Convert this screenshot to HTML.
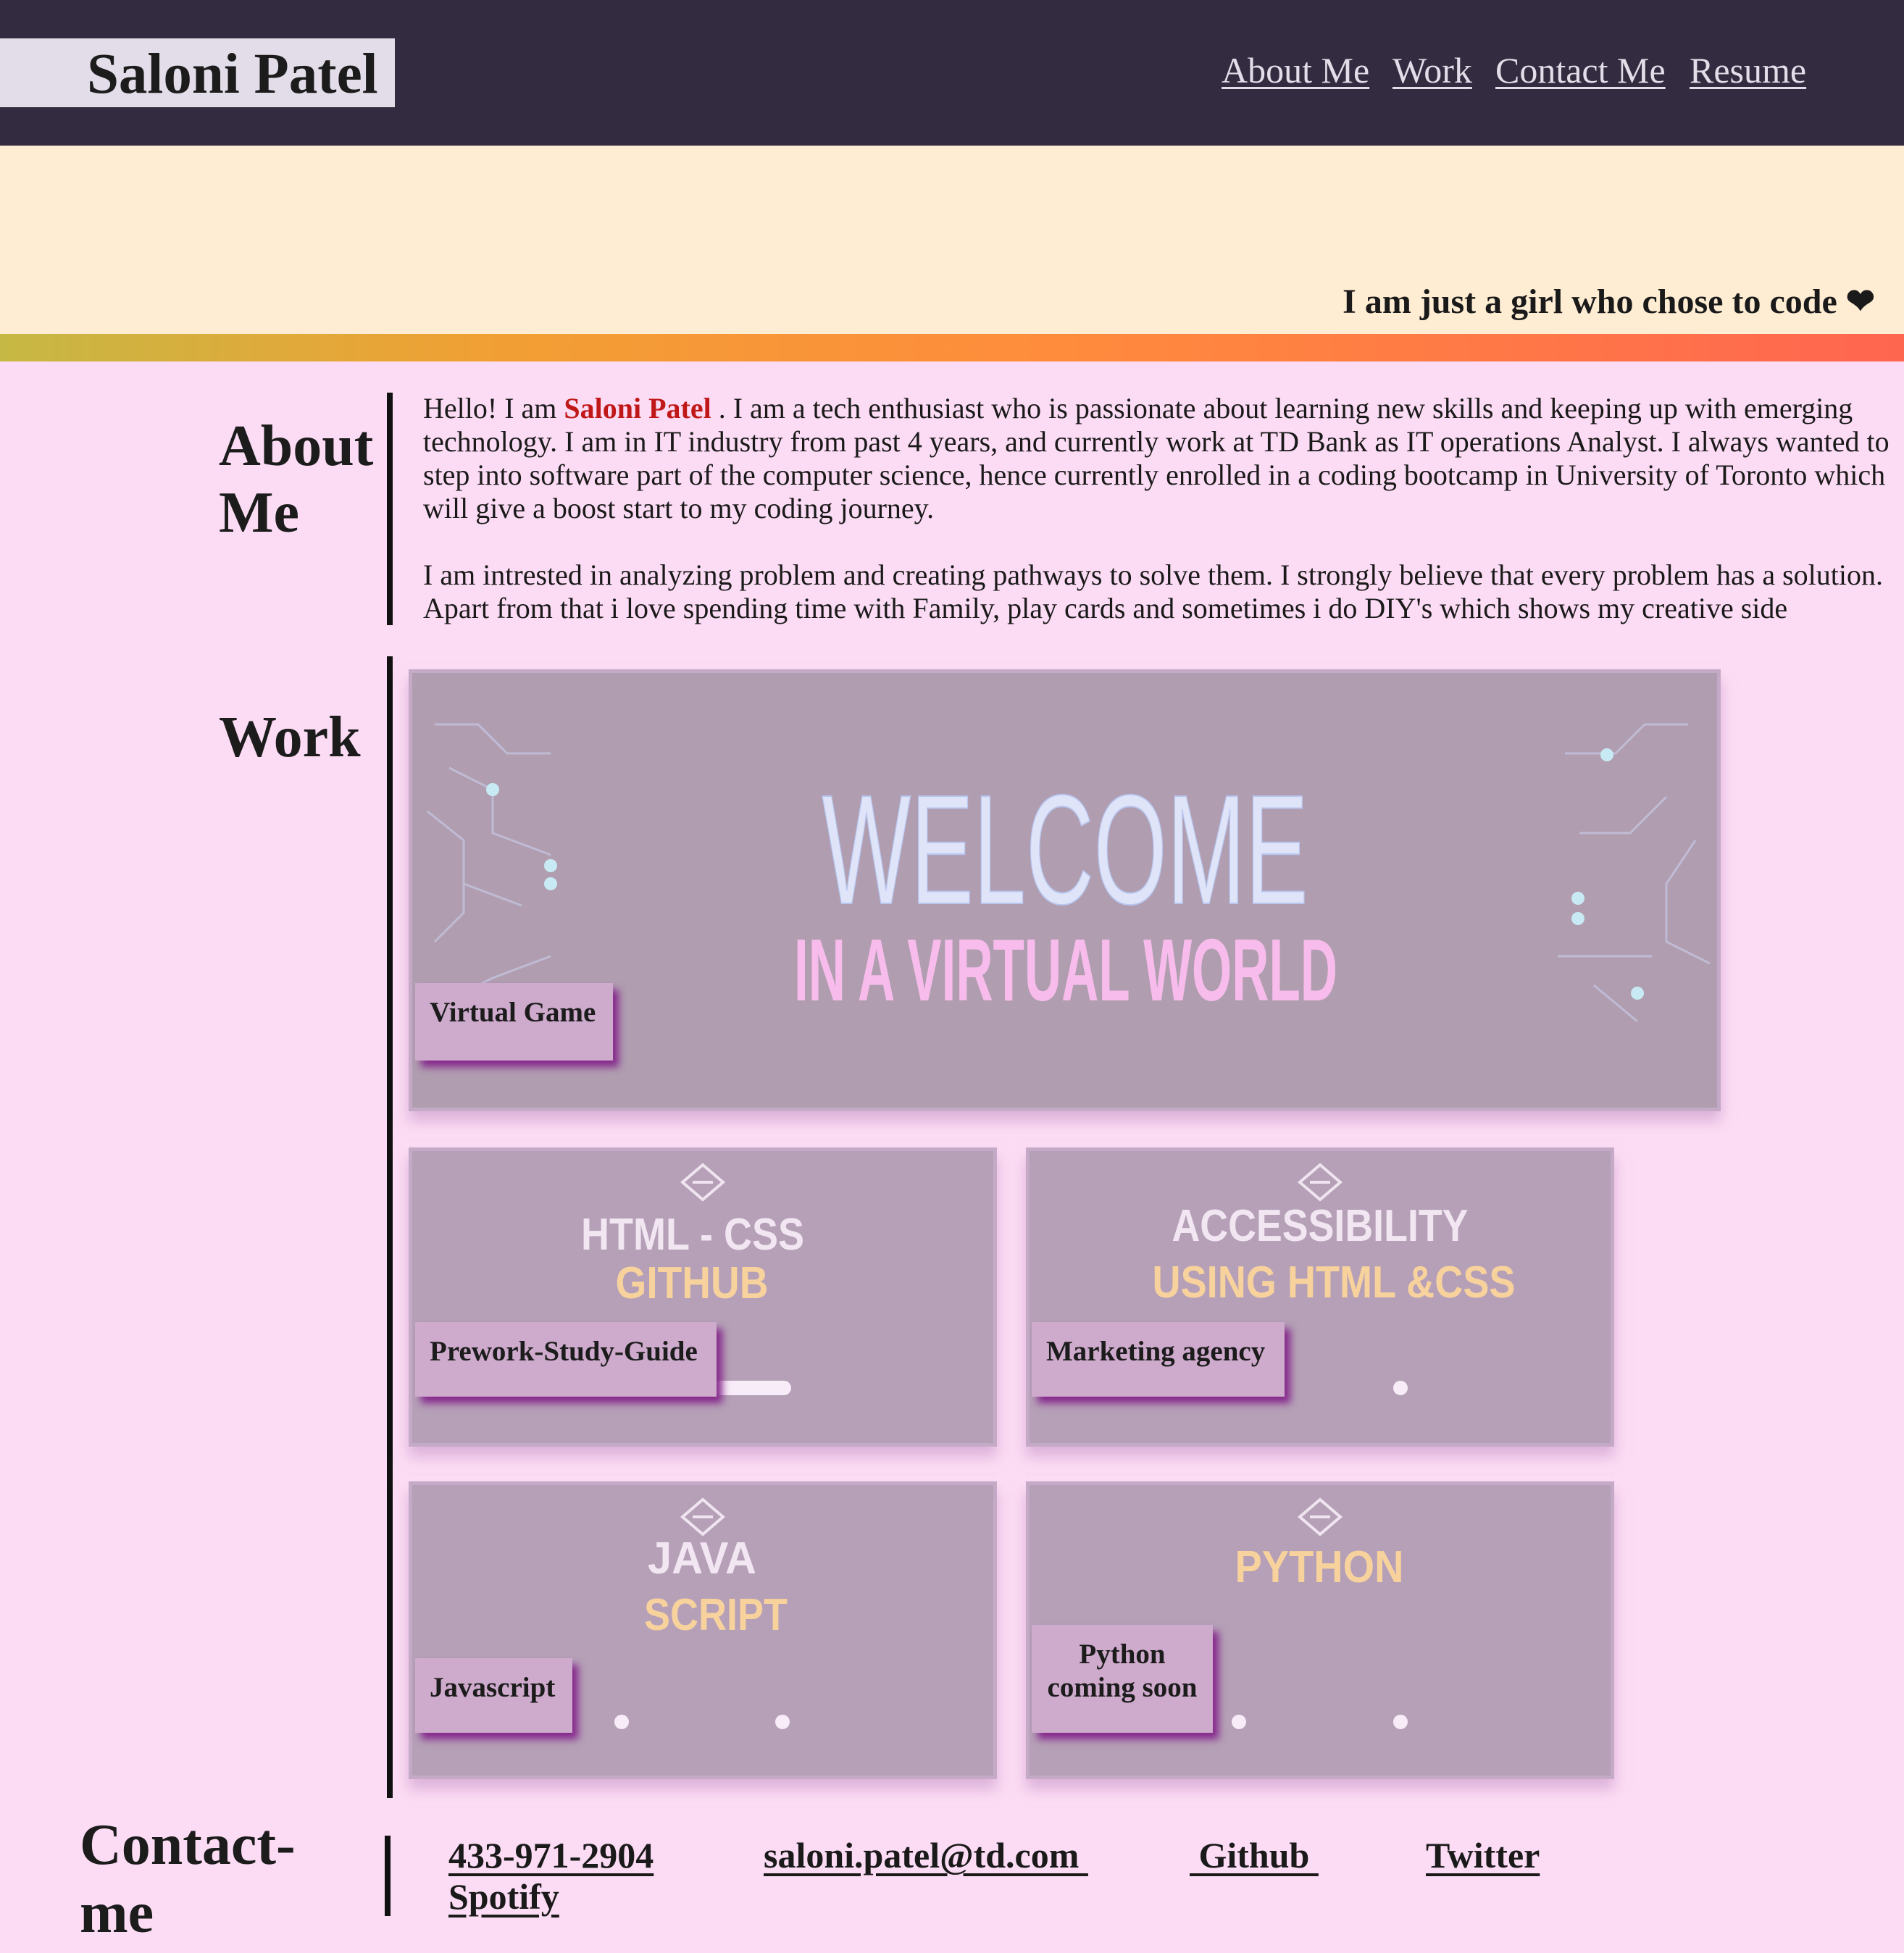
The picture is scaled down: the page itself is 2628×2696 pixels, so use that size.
<!DOCTYPE html>
<html><head><meta charset="utf-8">
<style>
*{margin:0;padding:0;box-sizing:border-box}
body{width:2628px;height:2696px;background:#fcdcf4;position:relative;overflow:hidden;font-family:"Liberation Serif",serif;color:#1a1a1a}
.a{position:absolute}
#hdr{left:0;top:0;width:2628px;height:201px;background:#332c40}
#logo{left:0;top:53px;width:545px;height:95px;background:#e3dde9;font-weight:bold;font-size:79px;line-height:99px;padding-left:120px;color:#1c1c1c;white-space:nowrap}
.nav{top:68px;font-size:50px;color:#e3dde9;text-decoration:underline;text-decoration-thickness:3px;text-underline-offset:6px;white-space:nowrap}
#hero{left:0;top:201px;width:2628px;height:260px;background:#feedd3}
#tag{right:40px;top:388px;font-size:48px;font-weight:bold;white-space:nowrap}
#band{left:0;top:461px;width:2628px;height:38px;background:linear-gradient(90deg,#c6b844 0%,#f0a034 25%,#ff8c3c 55%,#ff6650 100%)}
h2{position:absolute;font-size:80px;line-height:92px;font-weight:bold;color:#1c1c1c}
.bar{position:absolute;background:#111;width:8px}
.p{left:584px;font-size:40px;line-height:46px;white-space:nowrap}
.card{position:absolute;background:#b5a0b7;border:5px solid #c4aac6;box-shadow:0 14px 18px rgba(200,150,200,.6)}
.lbl{position:absolute;background:#ceaacc;font-weight:bold;font-size:39px;box-shadow:8px 9px 10px #86288c;color:#1c1c1c;padding:18px 0 0 20px;white-space:nowrap;line-height:46px}
.dot{position:absolute;width:20px;height:20px;border-radius:50%;background:#f8ecf8}
.c{position:absolute;font-size:50px;font-weight:bold;text-decoration:underline;text-decoration-thickness:4px;text-underline-offset:8px;white-space:nowrap}
</style></head><body>
<div id="hdr" class="a"></div>
<div id="logo" class="a">Saloni Patel</div>
<div class="a nav" style="left:1686px">About Me</div>
<div class="a nav" style="left:1922px">Work</div>
<div class="a nav" style="left:2064px">Contact Me</div>
<div class="a nav" style="left:2332px">Resume</div>
<div id="hero" class="a"></div>
<div id="tag" class="a">I am just a girl who chose to code &#10084;</div>
<div id="band" class="a"></div>

<h2 style="left:302px;top:570px">About<br>Me</h2>
<div class="bar" style="left:534px;top:542px;height:321px"></div>
<div class="a p" style="top:541px">Hello! I am <b style="color:#c01818">Saloni Patel</b> . I am a tech enthusiast who is passionate about learning new skills and keeping up with emerging</div>
<div class="a p" style="top:587px">technology. I am in IT industry from past 4 years, and currently work at TD Bank as IT operations Analyst. I always wanted to</div>
<div class="a p" style="top:633px">step into software part of the computer science, hence currently enrolled in a coding bootcamp in University of Toronto which</div>
<div class="a p" style="top:679px">will give a boost start to my coding journey.</div>
<div class="a p" style="top:771px">I am intrested in analyzing problem and creating pathways to solve them. I strongly believe that every problem has a solution.</div>
<div class="a p" style="top:817px">Apart from that i love spending time with Family, play cards and sometimes i do DIY's which shows my creative side</div>

<h2 style="left:302px;top:972px">Work</h2>
<div class="bar" style="left:534px;top:906px;height:1576px"></div>

<div class="card" style="left:564px;top:924px;width:1811px;height:610px;background:#b09eb0"></div>
<svg class="a" style="left:0;top:0" width="2628" height="2696">
<g fill="none" stroke="#c8c8e4" stroke-width="3" opacity=".7">
<path d="M600 1000 L660 1000 L700 1040 L760 1040 M620 1060 L680 1090 L680 1150 L760 1180 M590 1120 L640 1160 L640 1260 L600 1300 M640 1220 L720 1250 M760 1320 L680 1350 L620 1380"/>
<path d="M2330 1000 L2270 1000 L2230 1040 L2160 1040 M2300 1100 L2250 1150 L2180 1150 M2340 1160 L2300 1220 L2300 1300 L2360 1330 M2280 1320 L2150 1320 M2200 1360 L2260 1410"/>
</g>
<g fill="#c8eaf4"><circle cx="680" cy="1090" r="9"/><circle cx="760" cy="1195" r="9"/><circle cx="760" cy="1220" r="9"/><circle cx="2218" cy="1042" r="9"/><circle cx="2178" cy="1240" r="9"/><circle cx="2178" cy="1268" r="9"/><circle cx="2260" cy="1371" r="9"/></g>
<text x="1470" y="1247" text-anchor="middle" font-family="Liberation Sans" font-size="215" fill="#dfe4f8" textLength="671" lengthAdjust="spacingAndGlyphs" stroke="#b8c6f0" stroke-width="2">WELCOME</text>
<text x="1471" y="1381" text-anchor="middle" font-family="Liberation Sans" font-weight="bold" font-size="122" fill="#f8bcec" textLength="750" lengthAdjust="spacingAndGlyphs">IN A VIRTUAL WORLD</text>
</svg>
<div class="lbl" style="left:573px;top:1357px;width:273px;height:107px">Virtual Game</div>

<div class="card" style="left:564px;top:1584px;width:812px;height:413px"></div>
<div class="card" style="left:1416px;top:1584px;width:812px;height:413px"></div>
<div class="card" style="left:564px;top:2045px;width:812px;height:411px"></div>
<div class="card" style="left:1416px;top:2045px;width:812px;height:411px"></div>
<svg class="a" style="left:0;top:0" width="2628" height="2696" font-family="Liberation Sans" font-weight="bold" text-anchor="middle">
<g fill="none" stroke="#f0e4f0" stroke-width="4">
<path d="M970 1608 L998 1632 L970 1656 L942 1632 Z M956 1632 L984 1632"/>
<path d="M1822 1608 L1850 1632 L1822 1656 L1794 1632 Z M1808 1632 L1836 1632"/>
<path d="M970 2070 L998 2094 L970 2118 L942 2094 Z M956 2094 L984 2094"/>
<path d="M1822 2070 L1850 2094 L1822 2118 L1794 2094 Z M1808 2094 L1836 2094"/>
</g>
<text x="956" y="1725" font-size="62" fill="#f2e6f2" textLength="308" lengthAdjust="spacingAndGlyphs">HTML - CSS</text>
<text x="955" y="1792" font-size="62" fill="#f8d29c" textLength="211" lengthAdjust="spacingAndGlyphs">GITHUB</text>
<text x="1822" y="1713" font-size="62" fill="#f2e6f2" textLength="409" lengthAdjust="spacingAndGlyphs">ACCESSIBILITY</text>
<text x="1841" y="1791" font-size="62" fill="#f8d29c" textLength="501" lengthAdjust="spacingAndGlyphs">USING HTML &amp;CSS</text>
<text x="969" y="2172" font-size="62" fill="#f2e6f2" textLength="150" lengthAdjust="spacingAndGlyphs">JAVA</text>
<text x="988" y="2250" font-size="62" fill="#f8d29c" textLength="198" lengthAdjust="spacingAndGlyphs">SCRIPT</text>
<text x="1821" y="2184" font-size="62" fill="#f8d29c" textLength="233" lengthAdjust="spacingAndGlyphs">PYTHON</text>
</svg>
<div class="a" style="left:960px;top:1906px;width:132px;height:20px;border-radius:10px;background:#f8ecf8"></div>
<div class="dot" style="left:1923px;top:1906px"></div>
<div class="dot" style="left:848px;top:2367px"></div>
<div class="dot" style="left:1070px;top:2367px"></div>
<div class="dot" style="left:1700px;top:2367px"></div>
<div class="dot" style="left:1923px;top:2367px"></div>
<div class="lbl" style="left:573px;top:1825px;width:416px;height:103px">Prework-Study-Guide</div>
<div class="lbl" style="left:1424px;top:1825px;width:349px;height:103px">Marketing agency</div>
<div class="lbl" style="left:573px;top:2289px;width:217px;height:103px">Javascript</div>
<div class="lbl" style="left:1424px;top:2243px;width:250px;height:149px;text-align:center;padding:18px 0 0 0">Python<br>coming soon</div>

<h2 style="left:110px;top:2500px;line-height:94px">Contact-<br>me</h2>
<div class="bar" style="left:531px;top:2534px;height:111px"></div>
<div class="c" style="left:619px;top:2532px">433-971-2904</div>
<div class="c" style="left:1054px;top:2532px">saloni.patel@td.com&nbsp;</div>
<div class="c" style="left:1642px;top:2532px">&nbsp;Github&nbsp;</div>
<div class="c" style="left:1968px;top:2532px">Twitter</div>
<div class="c" style="left:619px;top:2589px">Spotify</div>
</body></html>
